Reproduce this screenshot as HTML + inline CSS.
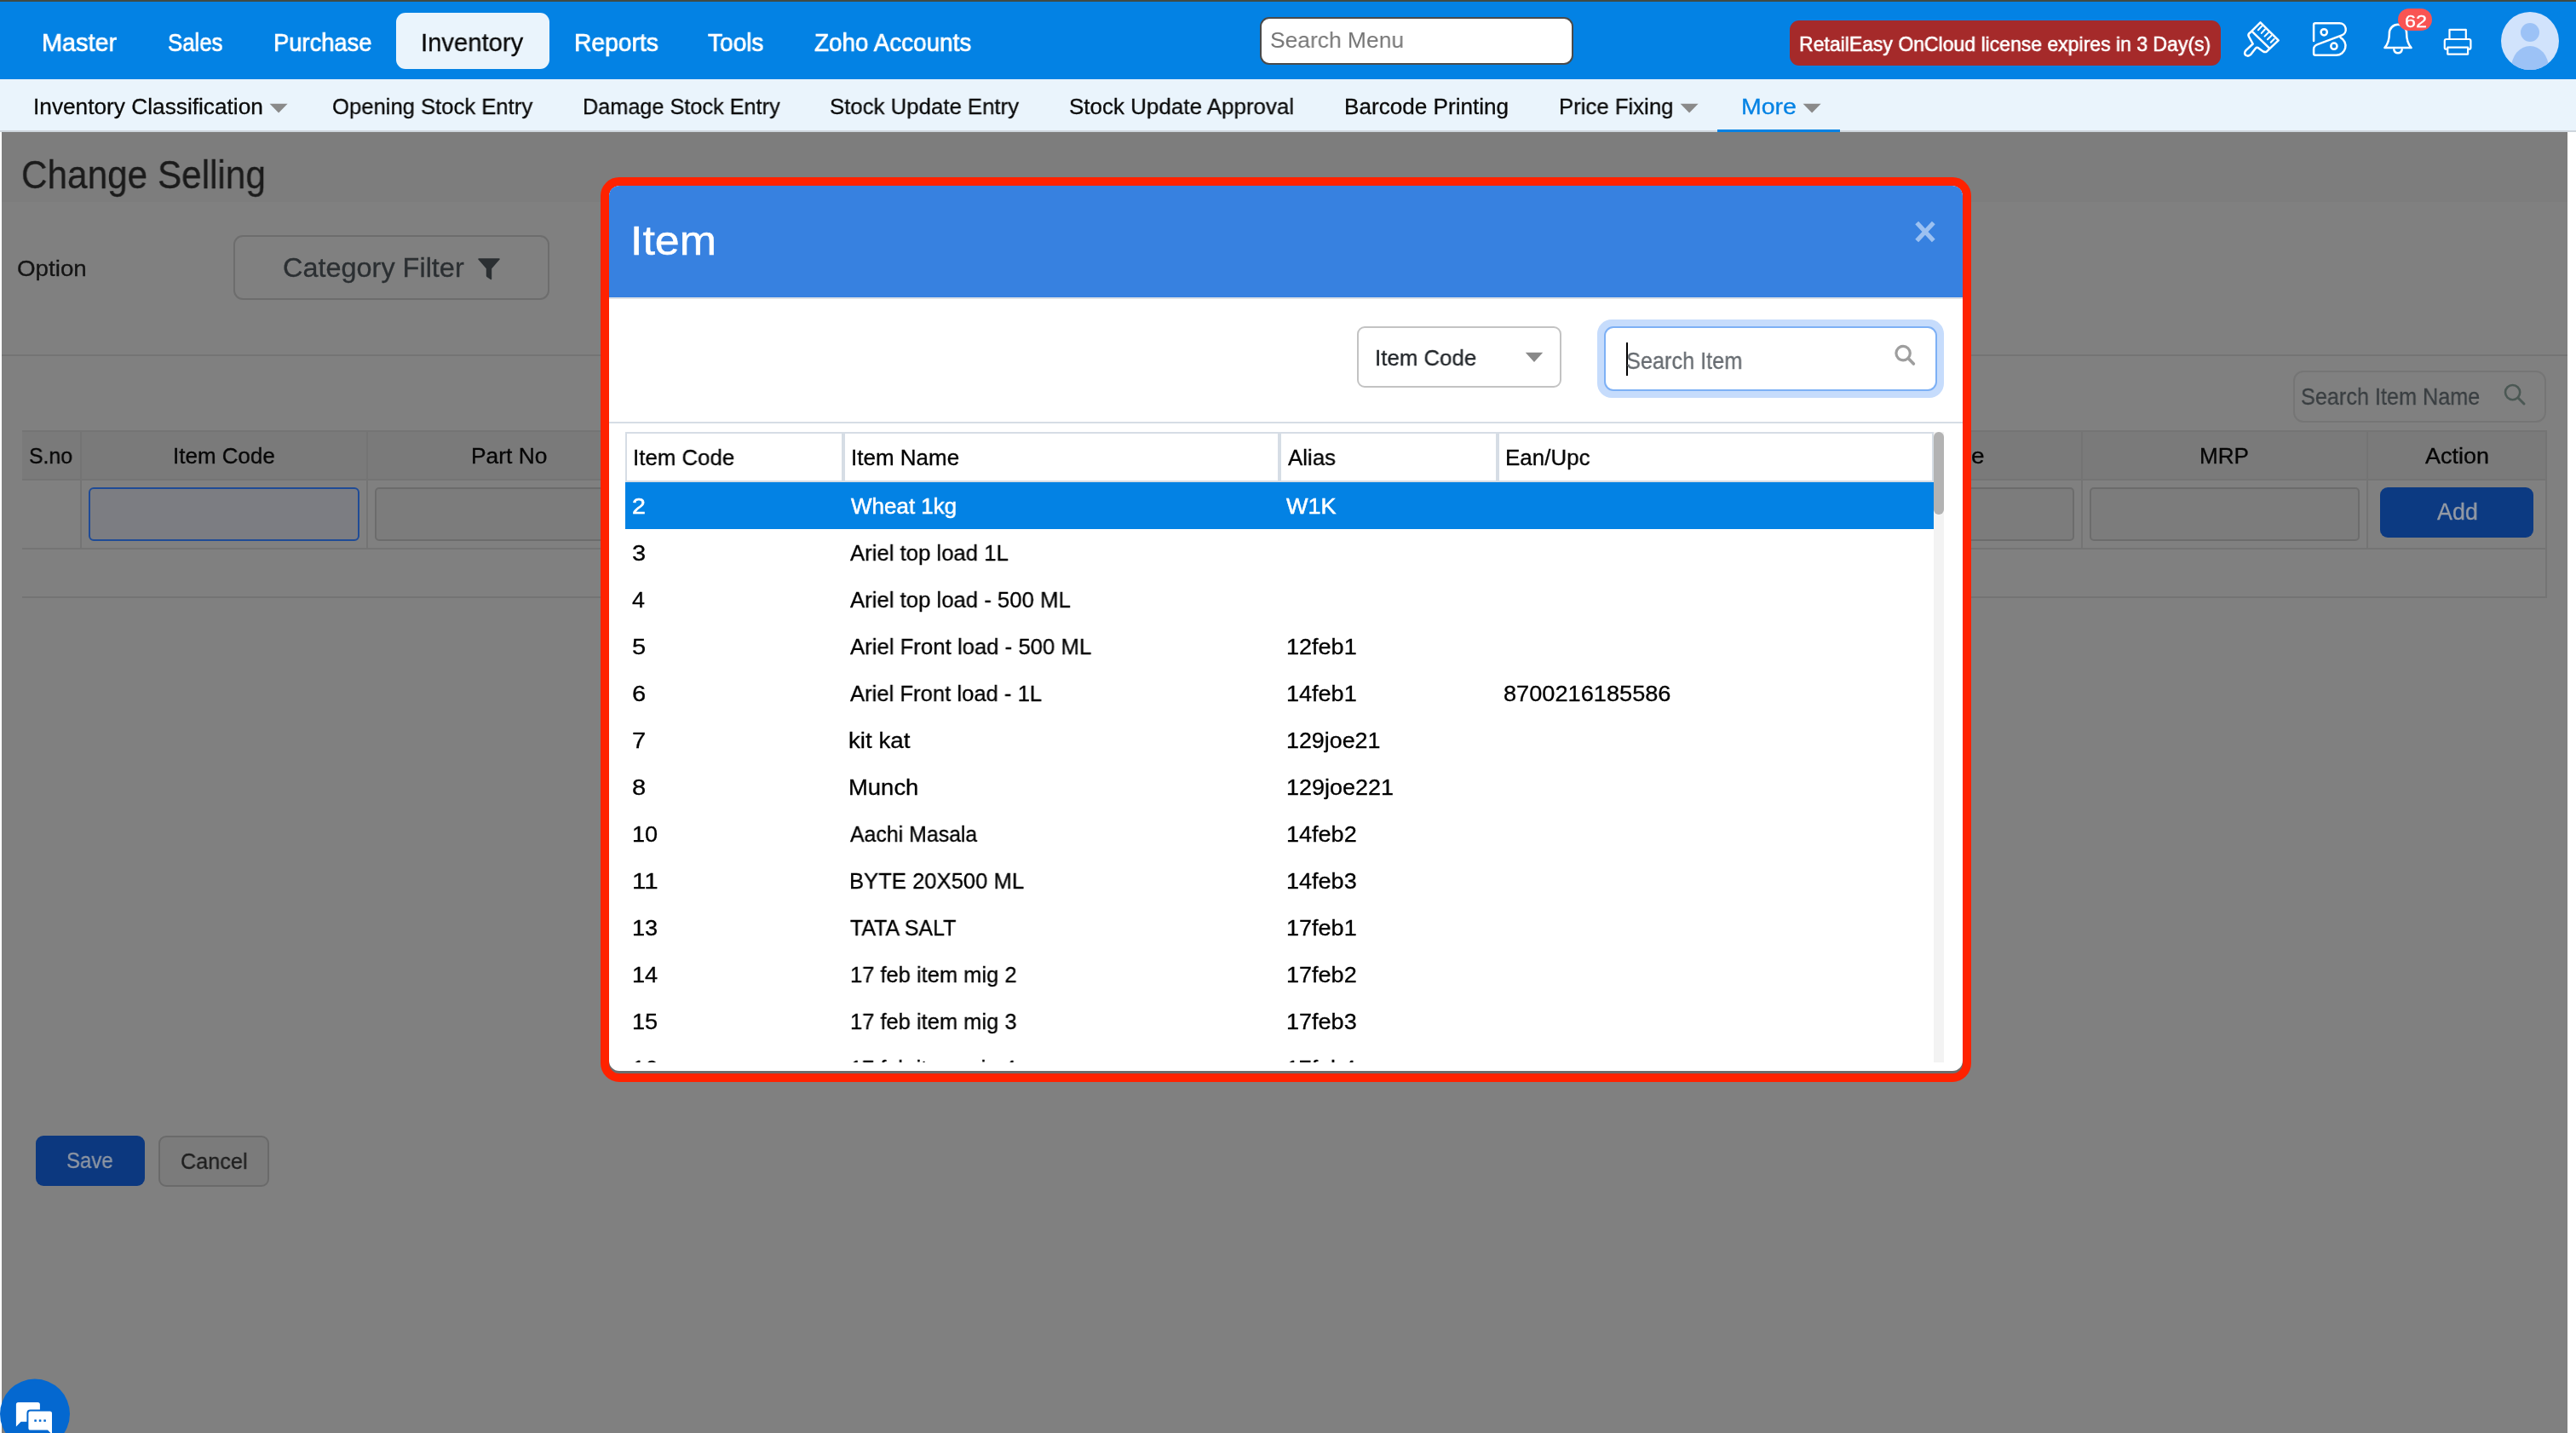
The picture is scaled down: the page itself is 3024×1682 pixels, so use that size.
<!DOCTYPE html>
<html><head><meta charset="utf-8"><title>Change Selling</title>
<style>
html,body{margin:0;padding:0}
body{width:3024px;height:1682px;overflow:hidden;background:#fff;position:relative;font-family:'Liberation Sans',sans-serif}
div,span,svg{position:absolute;box-sizing:border-box}
header,main,section,aside{position:absolute;left:0;top:0;width:0;height:0;display:block}
.t{white-space:pre;transform-origin:0 0;display:block;will-change:transform}
#topbar{left:0;top:0;width:3024px;height:2px;background:#3f4a45}
#hdr{left:0;top:2px;width:3024px;height:91px;background:#0382e4}
#sub{left:0;top:93px;width:3024px;height:62px;background:#eaf4fc;border-bottom:2px solid #cdd5dc}
#page{left:2px;top:155px;width:3012px;height:1527px;background:#808080;overflow:hidden}
#tband{left:0;top:0;width:3012px;height:82px;background:#7d7d7d}
.ln{background:#747474}
#modal{left:705px;top:208px;width:1609px;height:1062px;border:10px solid #ff2200;border-radius:22px;background:linear-gradient(to bottom,#3781e0 0,#3781e0 120px,#6c6c6c 120px);overflow:hidden}
#mc{left:0;top:0;width:1589px;height:1039px;background:#fff;border-radius:12px;overflow:hidden}
#mh{left:0;top:0;width:1589px;height:133px;background:#3781e0;border-bottom:2px solid #dee2e6}
</style></head><body>
<header>
<div id="topbar"></div>
<div id="hdr"></div>
<div id="sub"></div>
<!-- header widgets (page coordinates) -->
<div style="left:465px;top:15px;width:180px;height:66px;background:#eaf4fc;border-radius:11px"></div>
<div style="left:1479px;top:20px;width:368px;height:56px;background:#fff;border:2px solid #4a4a4a;border-radius:11px"></div>
<div style="left:2101px;top:24px;width:506px;height:53px;background:#a52a2a;border-radius:11px"></div>
<div style="left:2016px;top:152px;width:144px;height:3px;background:#0382e4"></div>
<svg style="left:0;top:0" width="3024" height="160" viewBox="0 0 3024 160">
 <g fill="#8a8a8a">
  <path d="M316.6 121.7h21l-10.5 10.8z"/><path d="M1972.6 121.7h21l-10.5 10.8z"/><path d="M2116.6 121.7h21l-10.5 10.8z"/>
 </g>
 <g fill="none" stroke="#fff" stroke-width="2.5" stroke-linecap="round" stroke-linejoin="round">
  <!-- brush -->
  <path d="M2653.5 26.3 L2641.4 38.3 Q2638.6 40.2 2639.8 42.7 L2644.7 51.5 L2636.5 59.1 Q2633.6 62.7 2636.6 65 Q2639.5 66.6 2642 64.2 L2648 56.6 Q2649.3 55.2 2651 56.2 L2656.8 60.4 Q2659 61.8 2661 60.4 L2674.7 47.3 Z"/>
  <path d="M2644.2 37.3 L2664.1 56.6"/>
  <path d="M2655.1 30.8L2650.9 35.3M2658.8 34.5L2654.8 38.9M2662.9 38.3L2658.5 42.6M2666.3 42L2661.9 46.3M2669.7 45.7L2665.7 49.8" stroke-width="2"/>
  <!-- B -->
  <path d="M2716.1 47.9 V29.3 Q2716.1 27.3 2718.1 27.3 H2746.5 A7.3 7.3 0 0 1 2749.1 41.4 L2720.6 52.2 Q2716.1 54 2716.1 57.8 V62.8 Q2716.1 64.8 2718.1 64.8 H2742.5 A11 11 0 0 0 2747.6 44.1"/>
  <circle cx="2728.2" cy="37.8" r="3.6"/><circle cx="2739.9" cy="54.2" r="3.6"/>
  <!-- bell -->
  <path d="M2799.4 56.1 Q2804.9 50 2804.9 38.9 A10.1 10.1 0 0 1 2825.1 38.9 Q2825.1 50 2830.6 56.1 Z"/>
  <path d="M2810.3 58.3 A4.8 5 0 0 0 2819.7 58.3"/>
  <!-- printer -->
  <path d="M2875.5 46 V34.8 H2894.8 V46" stroke-width="2.2"/>
  <path d="M2873 57.6 H2871.5 Q2869.8 57.6 2869.8 55.9 V48 Q2869.8 46 2871.8 46 H2898.4 Q2900.4 46 2900.4 48 V55.9 Q2900.4 57.6 2898.7 57.6 H2897.4" stroke-width="2.2"/>
  <rect x="2873.3" y="55.6" width="23.8" height="8" stroke-width="2.2"/>
 </g>
 <!-- badge -->
 <rect x="2815" y="10" width="40" height="26" rx="13" fill="#f95453"/>
 <!-- avatar -->
 <clipPath id="av"><circle cx="2970" cy="48" r="34"/></clipPath>
 <circle cx="2970" cy="48" r="34" fill="#d1e3fc"/>
 <g clip-path="url(#av)" fill="#9cc2f6"><circle cx="2970" cy="38" r="11"/><ellipse cx="2970" cy="80" rx="22" ry="26"/></g>
</svg>
<span class="t" style="left:49.4px;top:34.5px;font-size:29.5px;line-height:29.5px;color:#fff;transform:scaleX(0.9773);-webkit-text-stroke:0.7px #fff;">Master</span>
<span class="t" style="left:197.1px;top:34.5px;font-size:29.5px;line-height:29.5px;color:#fff;transform:scaleX(0.8732);-webkit-text-stroke:0.7px #fff;">Sales</span>
<span class="t" style="left:320.5px;top:34.5px;font-size:29.5px;line-height:29.5px;color:#fff;transform:scaleX(0.9264);-webkit-text-stroke:0.7px #fff;">Purchase</span>
<span class="t" style="left:673.7px;top:34.5px;font-size:29.5px;line-height:29.5px;color:#fff;transform:scaleX(0.9580);-webkit-text-stroke:0.7px #fff;">Reports</span>
<span class="t" style="left:831.0px;top:34.5px;font-size:29.5px;line-height:29.5px;color:#fff;transform:scaleX(0.9507);-webkit-text-stroke:0.7px #fff;">Tools</span>
<span class="t" style="left:956.0px;top:34.5px;font-size:29.5px;line-height:29.5px;color:#fff;transform:scaleX(0.9440);-webkit-text-stroke:0.7px #fff;">Zoho Accounts</span>
<span class="t" style="left:493.9px;top:34.5px;font-size:29.5px;line-height:29.5px;color:#0b0b0b;transform:scaleX(0.9915);-webkit-text-stroke:0.3px #0b0b0b;">Inventory</span>
<span class="t" style="left:1491.3px;top:33.7px;font-size:26.67px;line-height:26.67px;color:#757575;transform:scaleX(0.9903);">Search Menu</span>
<span class="t" style="left:2112.4px;top:39.6px;font-size:24.5px;line-height:24.5px;color:#fff;transform:scaleX(0.9387);-webkit-text-stroke:0.6px #fff;">RetailEasy OnCloud license expires in 3 Day(s)</span>
<span class="t" style="left:2822.8px;top:14.8px;font-size:20px;line-height:20px;color:#fff;transform:scaleX(1.1650);-webkit-text-stroke:0.3px #fff;">62</span>
<span class="t" style="left:38.9px;top:111.7px;font-size:26px;line-height:26px;color:#0b0b0b;transform:scaleX(1.0095);-webkit-text-stroke:0.3px #0b0b0b;">Inventory Classification</span>
<span class="t" style="left:389.7px;top:111.7px;font-size:26px;line-height:26px;color:#0b0b0b;transform:scaleX(0.9861);-webkit-text-stroke:0.3px #0b0b0b;">Opening Stock Entry</span>
<span class="t" style="left:683.9px;top:111.7px;font-size:26px;line-height:26px;color:#0b0b0b;transform:scaleX(0.9716);-webkit-text-stroke:0.3px #0b0b0b;">Damage Stock Entry</span>
<span class="t" style="left:974.3px;top:111.7px;font-size:26px;line-height:26px;color:#0b0b0b;transform:scaleX(0.9914);-webkit-text-stroke:0.3px #0b0b0b;">Stock Update Entry</span>
<span class="t" style="left:1255.0px;top:111.7px;font-size:26px;line-height:26px;color:#0b0b0b;transform:scaleX(0.9985);-webkit-text-stroke:0.3px #0b0b0b;">Stock Update Approval</span>
<span class="t" style="left:1578.3px;top:111.7px;font-size:26px;line-height:26px;color:#0b0b0b;transform:scaleX(1.0048);-webkit-text-stroke:0.3px #0b0b0b;">Barcode Printing</span>
<span class="t" style="left:1830.2px;top:111.7px;font-size:26px;line-height:26px;color:#0b0b0b;transform:scaleX(0.9902);-webkit-text-stroke:0.3px #0b0b0b;">Price Fixing</span>
<span class="t" style="left:2043.9px;top:111.7px;font-size:26px;line-height:26px;color:#0382e4;transform:scaleX(1.0964);-webkit-text-stroke:0.3px #0382e4;">More</span>
</header>
<!-- darkened page -->
<main>
<div id="page">
 <div id="tband"></div>
</div>

<div class="ln" style="left:2px;top:416px;width:3012px;height:2px"></div>
<div style="left:274px;top:276px;width:371px;height:76px;border:2px solid #6d6d6d;border-radius:11px"></div>
<svg style="left:560px;top:302px" width="28" height="28" viewBox="0 0 28 28"><path d="M2.2 1.2 H25.8 Q27.6 1.2 26.4 2.8 L17.2 13.2 V25.2 Q17.2 27 15.8 26 L11.4 22.9 Q10.8 22.4 10.8 21.6 V13.2 L1.6 2.8 Q0.4 1.2 2.2 1.2Z" fill="#2b2f32"/></svg>
<div style="left:2692px;top:435px;width:297px;height:61px;border:2px solid #757575;border-radius:12px"></div>
<svg style="left:2936px;top:447px" width="32" height="32" viewBox="0 0 32 32"><circle cx="13.6" cy="13.6" r="8.6" fill="none" stroke="#4b5854" stroke-width="2.6"/><path d="M19.8 19.8 L27 27" stroke="#4b5854" stroke-width="3" stroke-linecap="round"/></svg>
<div style="left:26px;top:506px;width:2963px;height:57px;background:#7a7a7a"></div>
<div class="ln" style="left:26px;top:505px;width:2964px;height:2px"></div>
<div class="ln" style="left:26px;top:562px;width:2964px;height:2px"></div>
<div class="ln" style="left:26px;top:643px;width:2964px;height:2px"></div>
<div class="ln" style="left:26px;top:700px;width:2964px;height:2px"></div>
<div class="ln" style="left:94px;top:506px;width:2px;height:138px"></div>
<div class="ln" style="left:430px;top:506px;width:2px;height:138px"></div>
<div class="ln" style="left:2443px;top:506px;width:2px;height:138px"></div>
<div class="ln" style="left:2778px;top:506px;width:2px;height:138px"></div>
<div class="ln" style="left:2988px;top:506px;width:2px;height:196px"></div>
<div style="left:104px;top:572px;width:318px;height:63px;border:2.5px solid #1f4b96;border-radius:6px;background:#7c7d82"></div>
<div style="left:440px;top:572px;width:319px;height:63px;border:2px solid #6c6c6c;border-radius:5px;background:#7c7c7c"></div>
<div style="left:2116px;top:572px;width:319px;height:63px;border:2px solid #6c6c6c;border-radius:5px;background:#7c7c7c"></div>
<div style="left:2453px;top:572px;width:317px;height:63px;border:2px solid #6c6c6c;border-radius:5px;background:#7c7c7c"></div>
<div style="left:2794px;top:572px;width:180px;height:59px;background:#0c3a82;border-radius:9px"></div>
<div style="left:42px;top:1333px;width:128px;height:59px;background:#0c387f;border-radius:9px"></div>
<div style="left:186px;top:1333px;width:130px;height:60px;background:#7b7b7b;border:2px solid #6a6a6a;border-radius:9px"></div>
<span class="t" style="left:24.9px;top:182.2px;font-size:46px;line-height:46px;color:#1b1b1b;transform:scaleX(0.9195);-webkit-text-stroke:0.3px #1b1b1b;">Change Selling</span>
<span class="t" style="left:19.5px;top:302.0px;font-size:26px;line-height:26px;color:#141414;transform:scaleX(1.0676);-webkit-text-stroke:0.3px #141414;">Option</span>
<span class="t" style="left:331.8px;top:299.0px;font-size:31px;line-height:31px;color:#2b2f32;transform:scaleX(1.0463);-webkit-text-stroke:0.3px #2b2f32;">Category Filter</span>
<span class="t" style="left:2701.3px;top:451.8px;font-size:28px;line-height:28px;color:#393e41;transform:scaleX(0.9009);-webkit-text-stroke:0.3px #393e41;">Search Item Name</span>
<span class="t" style="left:34.2px;top:521.8px;font-size:26px;line-height:26px;color:#060606;transform:scaleX(0.9560);-webkit-text-stroke:0.3px #060606;">S.no</span>
<span class="t" style="left:202.7px;top:521.8px;font-size:26px;line-height:26px;color:#060606;transform:scaleX(0.9983);-webkit-text-stroke:0.3px #060606;">Item Code</span>
<span class="t" style="left:553.4px;top:521.8px;font-size:26px;line-height:26px;color:#060606;transform:scaleX(1.0141);-webkit-text-stroke:0.3px #060606;">Part No</span>
<span class="t" style="left:2581.6px;top:521.8px;font-size:26px;line-height:26px;color:#060606;transform:scaleX(1.0036);-webkit-text-stroke:0.3px #060606;">MRP</span>
<span class="t" style="left:2847.2px;top:521.8px;font-size:26px;line-height:26px;color:#060606;transform:scaleX(1.0380);-webkit-text-stroke:0.3px #060606;">Action</span>
<span class="t" style="left:2265.5px;top:521.8px;font-size:26px;line-height:26px;color:#060606;transform:scaleX(1.0714);-webkit-text-stroke:0.3px #060606;">Price</span>
<span class="t" style="left:2860.8px;top:587.9px;font-size:27px;line-height:27px;color:#959ba5;transform:scaleX(0.9957);-webkit-text-stroke:0.3px #959ba5;">Add</span>
<span class="t" style="left:78.3px;top:1349.4px;font-size:26px;line-height:26px;color:#8e96a3;transform:scaleX(0.9232);-webkit-text-stroke:0.3px #8e96a3;">Save</span>
<span class="t" style="left:211.9px;top:1350.0px;font-size:26px;line-height:26px;color:#1f1f1f;transform:scaleX(0.9692);-webkit-text-stroke:0.3px #1f1f1f;">Cancel</span>
</main>
<!-- modal -->
<section>
<div id="modal"><div id="mc"><div id="mh"></div></div></div>

<svg style="left:2246px;top:257px" width="28" height="30" viewBox="0 0 28 30"><path d="M4.2 4.4 L23.8 25.6 M23.8 4.4 L4.2 25.6" stroke="#9cc1f1" stroke-width="5.2" fill="none"/></svg>
<div style="left:1593px;top:383px;width:240px;height:72px;border:2px solid #c3c3c3;border-radius:9px;background:#fff"></div>
<svg style="left:1790px;top:413px" width="22" height="13" viewBox="0 0 22 13"><path d="M0.8 0.8 H21.2 L11 12z" fill="#898989"/></svg>
<div style="left:1875px;top:375px;width:407px;height:92px;border-radius:17px;background:#c6dcfc"></div>
<div style="left:1883px;top:383px;width:391px;height:76px;border:2px solid #7db0f5;border-radius:11px;background:#fff"></div>
<div style="left:1909px;top:402px;width:2px;height:39px;background:#000"></div>
<svg style="left:2222px;top:402px" width="30" height="30" viewBox="0 0 30 30"><circle cx="12.1" cy="12.6" r="8.2" fill="none" stroke="#9e9e9e" stroke-width="3.2"/><path d="M18.3 18.8 L24.4 25" stroke="#9e9e9e" stroke-width="3.6" stroke-linecap="round"/></svg>
<div style="left:715px;top:495px;width:1589px;height:2px;background:#d6dde5"></div>
<div style="left:734px;top:507px;width:1536px;height:59px;background:#d6dde5"></div>
<div style="left:736px;top:509px;width:252px;height:55px;background:#fff"></div>
<div style="left:992px;top:509px;width:508px;height:55px;background:#fff"></div>
<div style="left:1504px;top:509px;width:252px;height:55px;background:#fff"></div>
<div style="left:1760px;top:509px;width:508px;height:55px;background:#fff"></div>
<div style="left:734px;top:566px;width:1536px;height:55px;background:#0382e4"></div>
<div style="left:2270px;top:507px;width:12px;height:740px;background:#f3f3f3"></div>
<div style="left:2270px;top:507px;width:12px;height:97px;background:#b3b3b3;border-radius:6px"></div>
<span class="t" style="left:740.4px;top:258.8px;font-size:48px;line-height:48px;color:#fff;transform:scaleX(1.0808);-webkit-text-stroke:0.55px #fff;">Item</span>
<span class="t" style="left:1614.2px;top:406.5px;font-size:26px;line-height:26px;color:#212529;transform:scaleX(0.9940);-webkit-text-stroke:0.3px #212529;">Item Code</span>
<span class="t" style="left:1909.3px;top:409.9px;font-size:28px;line-height:28px;color:#666b70;transform:scaleX(0.9027);-webkit-text-stroke:0.3px #666b70;">Search Item</span>
<div style="left:0;top:0;width:3024px;height:1247px;overflow:hidden">
<span class="t" style="left:743.3px;top:524.0px;font-size:26px;line-height:26px;color:#000;transform:scaleX(0.9940);-webkit-text-stroke:0.3px #000;">Item Code</span>
<span class="t" style="left:998.8px;top:524.0px;font-size:26px;line-height:26px;color:#000;transform:scaleX(0.9992);-webkit-text-stroke:0.3px #000;">Item Name</span>
<span class="t" style="left:1512.2px;top:524.0px;font-size:26px;line-height:26px;color:#000;transform:scaleX(0.9945);-webkit-text-stroke:0.3px #000;">Alias</span>
<span class="t" style="left:1766.8px;top:524.0px;font-size:26px;line-height:26px;color:#000;transform:scaleX(0.9979);-webkit-text-stroke:0.3px #000;">Ean/Upc</span>
<span class="t" style="left:741.9px;top:581.0px;font-size:26px;line-height:26px;color:#fff;transform:scaleX(1.0958);-webkit-text-stroke:0.55px #fff;">2</span>
<span class="t" style="left:998.6px;top:581.0px;font-size:26px;line-height:26px;color:#fff;transform:scaleX(0.9988);-webkit-text-stroke:0.55px #fff;">Wheat 1kg</span>
<span class="t" style="left:1510.3px;top:581.0px;font-size:26px;line-height:26px;color:#fff;transform:scaleX(1.0384);-webkit-text-stroke:0.55px #fff;">W1K</span>
<span class="t" style="left:741.7px;top:636.0px;font-size:26px;line-height:26px;color:#000;transform:scaleX(1.1167);-webkit-text-stroke:0.3px #000;">3</span>
<span class="t" style="left:998.4px;top:636.0px;font-size:26px;line-height:26px;color:#000;transform:scaleX(0.9888);-webkit-text-stroke:0.3px #000;">Ariel top load 1L</span>
<span class="t" style="left:741.8px;top:691.0px;font-size:26px;line-height:26px;color:#000;transform:scaleX(1.0308);-webkit-text-stroke:0.3px #000;">4</span>
<span class="t" style="left:998.4px;top:691.0px;font-size:26px;line-height:26px;color:#000;transform:scaleX(0.9893);-webkit-text-stroke:0.3px #000;">Ariel top load - 500 ML</span>
<span class="t" style="left:741.7px;top:746.0px;font-size:26px;line-height:26px;color:#000;transform:scaleX(1.1167);-webkit-text-stroke:0.3px #000;">5</span>
<span class="t" style="left:998.4px;top:746.0px;font-size:26px;line-height:26px;color:#000;transform:scaleX(0.9898);-webkit-text-stroke:0.3px #000;">Ariel Front load - 500 ML</span>
<span class="t" style="left:1509.7px;top:746.0px;font-size:26px;line-height:26px;color:#000;transform:scaleX(1.0395);-webkit-text-stroke:0.3px #000;">12feb1</span>
<span class="t" style="left:741.7px;top:801.0px;font-size:26px;line-height:26px;color:#000;transform:scaleX(1.1167);-webkit-text-stroke:0.3px #000;">6</span>
<span class="t" style="left:998.4px;top:801.0px;font-size:26px;line-height:26px;color:#000;transform:scaleX(0.9859);-webkit-text-stroke:0.3px #000;">Ariel Front load - 1L</span>
<span class="t" style="left:1509.7px;top:801.0px;font-size:26px;line-height:26px;color:#000;transform:scaleX(1.0395);-webkit-text-stroke:0.3px #000;">14feb1</span>
<span class="t" style="left:1765.4px;top:801.0px;font-size:26px;line-height:26px;color:#000;transform:scaleX(1.0452);-webkit-text-stroke:0.3px #000;">8700216185586</span>
<span class="t" style="left:741.7px;top:856.0px;font-size:26px;line-height:26px;color:#000;transform:scaleX(1.1167);-webkit-text-stroke:0.3px #000;">7</span>
<span class="t" style="left:996.3px;top:856.0px;font-size:26px;line-height:26px;color:#000;transform:scaleX(1.0667);-webkit-text-stroke:0.3px #000;">kit kat</span>
<span class="t" style="left:1509.7px;top:856.0px;font-size:26px;line-height:26px;color:#000;transform:scaleX(1.0317);-webkit-text-stroke:0.3px #000;">129joe21</span>
<span class="t" style="left:741.7px;top:911.0px;font-size:26px;line-height:26px;color:#000;transform:scaleX(1.1167);-webkit-text-stroke:0.3px #000;">8</span>
<span class="t" style="left:996.3px;top:911.0px;font-size:26px;line-height:26px;color:#000;transform:scaleX(1.0554);-webkit-text-stroke:0.3px #000;">Munch</span>
<span class="t" style="left:1509.7px;top:911.0px;font-size:26px;line-height:26px;color:#000;transform:scaleX(1.0364);-webkit-text-stroke:0.3px #000;">129joe221</span>
<span class="t" style="left:741.9px;top:966.0px;font-size:26px;line-height:26px;color:#000;transform:scaleX(1.0423);-webkit-text-stroke:0.3px #000;">10</span>
<span class="t" style="left:998.4px;top:966.0px;font-size:26px;line-height:26px;color:#000;transform:scaleX(0.9564);-webkit-text-stroke:0.3px #000;">Aachi Masala</span>
<span class="t" style="left:1509.7px;top:966.0px;font-size:26px;line-height:26px;color:#000;transform:scaleX(1.0395);-webkit-text-stroke:0.3px #000;">14feb2</span>
<span class="t" style="left:741.7px;top:1021.0px;font-size:26px;line-height:26px;color:#000;transform:scaleX(1.1292);-webkit-text-stroke:0.3px #000;">11</span>
<span class="t" style="left:996.5px;top:1021.0px;font-size:26px;line-height:26px;color:#000;transform:scaleX(0.9854);-webkit-text-stroke:0.3px #000;">BYTE 20X500 ML</span>
<span class="t" style="left:1509.7px;top:1021.0px;font-size:26px;line-height:26px;color:#000;transform:scaleX(1.0395);-webkit-text-stroke:0.3px #000;">14feb3</span>
<span class="t" style="left:741.9px;top:1076.0px;font-size:26px;line-height:26px;color:#000;transform:scaleX(1.0423);-webkit-text-stroke:0.3px #000;">13</span>
<span class="t" style="left:997.5px;top:1076.0px;font-size:26px;line-height:26px;color:#000;transform:scaleX(0.9594);-webkit-text-stroke:0.3px #000;">TATA SALT</span>
<span class="t" style="left:1509.7px;top:1076.0px;font-size:26px;line-height:26px;color:#000;transform:scaleX(1.0395);-webkit-text-stroke:0.3px #000;">17feb1</span>
<span class="t" style="left:741.9px;top:1131.0px;font-size:26px;line-height:26px;color:#000;transform:scaleX(1.0423);-webkit-text-stroke:0.3px #000;">14</span>
<span class="t" style="left:997.9px;top:1131.0px;font-size:26px;line-height:26px;color:#000;transform:scaleX(0.9806);-webkit-text-stroke:0.3px #000;">17 feb item mig 2</span>
<span class="t" style="left:1509.7px;top:1131.0px;font-size:26px;line-height:26px;color:#000;transform:scaleX(1.0395);-webkit-text-stroke:0.3px #000;">17feb2</span>
<span class="t" style="left:741.9px;top:1186.0px;font-size:26px;line-height:26px;color:#000;transform:scaleX(1.0423);-webkit-text-stroke:0.3px #000;">15</span>
<span class="t" style="left:997.9px;top:1186.0px;font-size:26px;line-height:26px;color:#000;transform:scaleX(0.9806);-webkit-text-stroke:0.3px #000;">17 feb item mig 3</span>
<span class="t" style="left:1509.7px;top:1186.0px;font-size:26px;line-height:26px;color:#000;transform:scaleX(1.0395);-webkit-text-stroke:0.3px #000;">17feb3</span>
<span class="t" style="left:741.9px;top:1241.0px;font-size:26px;line-height:26px;color:#000;transform:scaleX(1.0423);-webkit-text-stroke:0.3px #000;">16</span>
<span class="t" style="left:997.9px;top:1241.0px;font-size:26px;line-height:26px;color:#000;transform:scaleX(0.9756);-webkit-text-stroke:0.3px #000;">17 feb item mig 4</span>
<span class="t" style="left:1509.7px;top:1241.0px;font-size:26px;line-height:26px;color:#000;transform:scaleX(1.0260);-webkit-text-stroke:0.3px #000;">17feb4</span>
</div>

</section>
<aside>
<svg style="left:0;top:1610px" width="90" height="72" viewBox="0 1610 90 72">
 <circle cx="41" cy="1659.6" r="41" fill="#0468d0"/>
 <path d="M21.5 1646 H44.3 Q46.9 1646 46.9 1648.6 V1656 H36 Q32.2 1656 32.2 1659.8 V1668.7 H24.6 L18.9 1674.4 V1648.6 Q18.9 1646 21.5 1646Z" fill="#fff"/>
 <path d="M35.6 1655.6 H58.8 Q62 1655.6 62 1658.8 V1686 L55.6 1679.6 H35.6 Q32.4 1679.6 32.4 1676.4 V1658.8 Q32.4 1655.6 35.6 1655.6Z" fill="#fff" stroke="#0468d0" stroke-width="2"/>
 <g fill="#0468d0"><rect x="40.3" y="1666.2" width="2.6" height="2.6" rx=".6"/><rect x="45.8" y="1666.2" width="2.6" height="2.6" rx=".6"/><rect x="51.3" y="1666.2" width="2.6" height="2.6" rx=".6"/></g>
</svg>
</aside>
</body></html>
